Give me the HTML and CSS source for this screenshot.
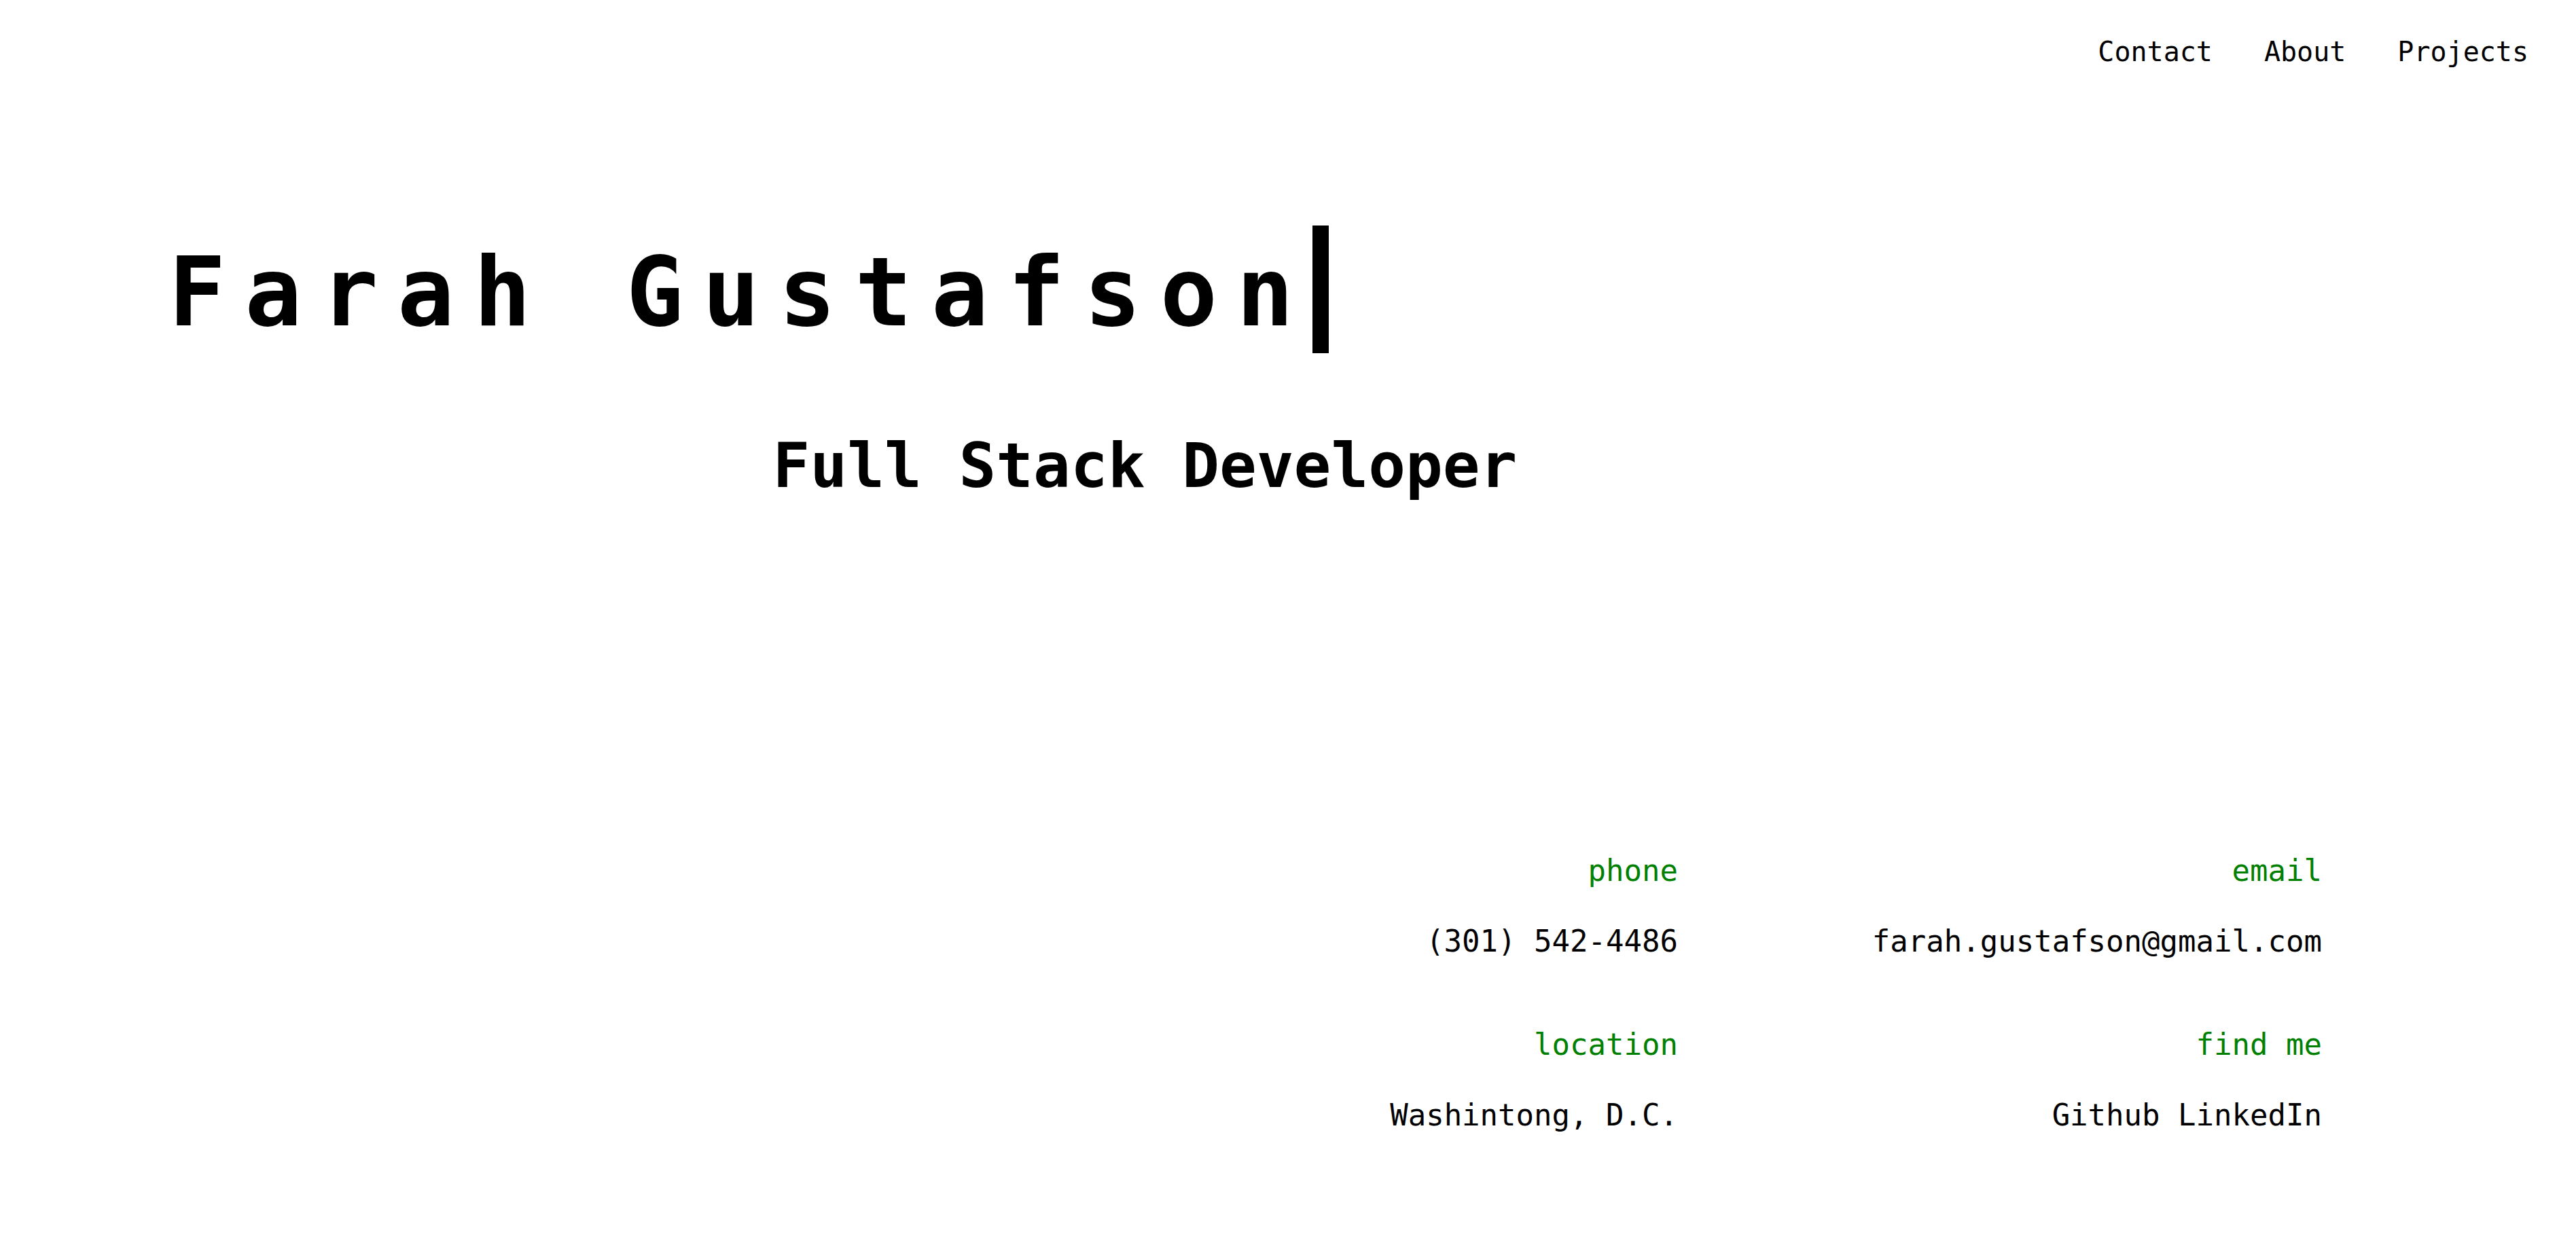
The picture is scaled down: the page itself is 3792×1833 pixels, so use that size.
FILE: index.html
```html
<!DOCTYPE html>
<html lang="en">
<head>
  <meta charset="utf-8">
  <meta name="viewport" content="width=device-width, initial-scale=1">
  <title>Farah Gustafson</title>
  <link rel="stylesheet" href="styles.css">
</head>
<body>
  <nav class="nav">
    <a href="#contact">Contact</a>
    <a href="#about">About</a>
    <a href="#projects">Projects</a>
  </nav>
  <main>
    <header class="intro">
      <h1 class="name">Farah Gustafson</h1>
      <h2 class="role">Full Stack Developer</h2>
    </header>
    <dl class="contact" id="contact">
      <div class="entry">
        <dt>phone</dt>
        <dd>(301) 542-4486</dd>
      </div>
      <div class="entry">
        <dt>email</dt>
        <dd>farah.gustafson@gmail.com</dd>
      </div>
      <div class="entry">
        <dt>location</dt>
        <dd>Washintong, D.C.</dd>
      </div>
      <div class="entry">
        <dt>find me</dt>
        <dd><a href="#github">Github</a> <a href="#linkedin">LinkedIn</a></dd>
      </div>
    </dl>
  </main>
</body>
</html>
```
FILE: styles.css
```css
* {
  box-sizing: border-box;
}

body,
h1,
h2,
dl,
dd {
  margin: 0;
}

body {
  background: #fff;
  color: #000;
  font-family: Consolas, "DejaVu Sans Mono", monospace;
}

a {
  color: inherit;
  text-decoration: none;
}

.nav {
  display: flex;
  justify-content: flex-end;
  gap: 76px;
  padding: 52px 70px 0;
  font-size: 40px;
  line-height: 48px;
}

.intro {
  display: flex;
  flex-direction: column;
  align-items: flex-start;
  gap: 108px;
  padding-top: 232px;
}

/* The right border is the typing cursor. */
.name {
  margin-left: 248px;
  padding-top: 10px;
  border-right: 24px solid #000;
  font-size: 140px;
  line-height: 178px;
  letter-spacing: 28px;
  white-space: nowrap;
}

.role {
  margin-left: 30%;
  font-size: 91px;
  line-height: 116px;
}

.contact {
  display: grid;
  grid-template-columns: 25vw 25vw;
  justify-content: end;
  row-gap: 100px;
  padding: 512px 374px 100px 0;
  font-size: 44px;
  line-height: 52px;
  text-align: right;
}

.entry {
  display: flex;
  flex-direction: column;
  gap: 52px;
}

.entry dt {
  color: green;
}
```
